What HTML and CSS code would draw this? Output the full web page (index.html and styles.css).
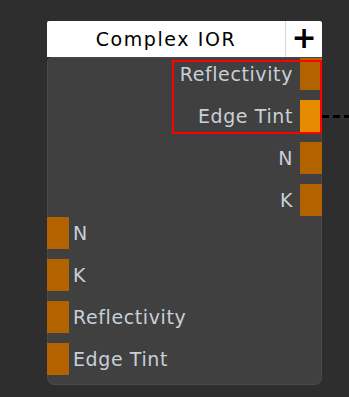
FILE: index.html
```html
<!DOCTYPE html>
<html lang="en">
<head>
	<meta charset="UTF-8">
	<title>Complex IOR</title>
	<link rel="stylesheet" href="styles.css">
</head>
<body>
	<div class="node">
		<div class="node_head">
			<span class="node_title">Complex IOR</span>
			<span class="node_add">+</span>
		</div>
		<div class="node_body">
			<div class="outputs">
				<div class="selected">
					<div class="row out">
						<span class="label">Reflectivity</span>
						<span class="port"></span>
					</div>
					<div class="row out">
						<span class="label">Edge Tint</span>
						<span class="port active"></span>
						<span class="wire"></span>
					</div>
				</div>
				<div class="row out">
					<span class="label">N</span>
					<span class="port"></span>
				</div>
				<div class="row out">
					<span class="label">K</span>
					<span class="port"></span>
				</div>
			</div>
			<div class="inputs">
				<div class="row in">
					<span class="port"></span>
					<span class="label">N</span>
				</div>
				<div class="row in">
					<span class="port"></span>
					<span class="label">K</span>
				</div>
				<div class="row in">
					<span class="port"></span>
					<span class="label">Reflectivity</span>
				</div>
				<div class="row in">
					<span class="port"></span>
					<span class="label">Edge Tint</span>
				</div>
			</div>
		</div>
	</div>
</body>
</html>
```

FILE: styles.css
```css
body {
	margin: 0;
	padding: 21px 0 0 47px;
	background: #2e2e2e;
	font-family: "DejaVu Sans", Verdana, sans-serif;
	font-size: 19px;
}
.node {
	width: 275px;
}
.node_head {
	display: flex;
	height: 36px;
	background: #fff;
	color: #000;
	border-radius: 2px 2px 0 0;
}
.node_title {
	flex: 1;
	text-align: center;
	line-height: 36px;
	letter-spacing: 1.6px;
}
.node_add {
	width: 36px;
	border-left: 1px solid #d8d8d8;
	text-align: center;
	line-height: 34px;
	font-size: 30px;
	font-weight: bold;
}
.node_body {
	display: flex;
	flex-direction: column;
	gap: 1px;
	padding: 1px 0 10px;
	background: #404040;
	border-radius: 6px 0 8px 8px;
	box-shadow: inset 0 0 0 1px #4a4a4a;
}
.outputs, .inputs, .selected {
	display: flex;
	flex-direction: column;
	gap: 10px;
}
.selected {
	position: relative;
}
.selected::after {
	content: "";
	position: absolute;
	top: 2px;
	bottom: -2px;
	left: 125px;
	right: 0;
	border: 2px solid #ff0000;
}
.row {
	position: relative;
	display: flex;
	align-items: center;
	height: 32px;
	color: #c8d0d8;
	letter-spacing: 0.6px;
}
.out {
	justify-content: flex-end;
	gap: 7px;
}
.in {
	gap: 4px;
}
.port {
	width: 22px;
	height: 32px;
	background: #b36200;
}
.port.active {
	background: #e68a00;
}
.wire {
	position: absolute;
	left: 100%;
	top: 15px;
	width: 40px;
	height: 3px;
	background: repeating-linear-gradient(90deg, #000 0 7px, transparent 7px 11px);
}
```
